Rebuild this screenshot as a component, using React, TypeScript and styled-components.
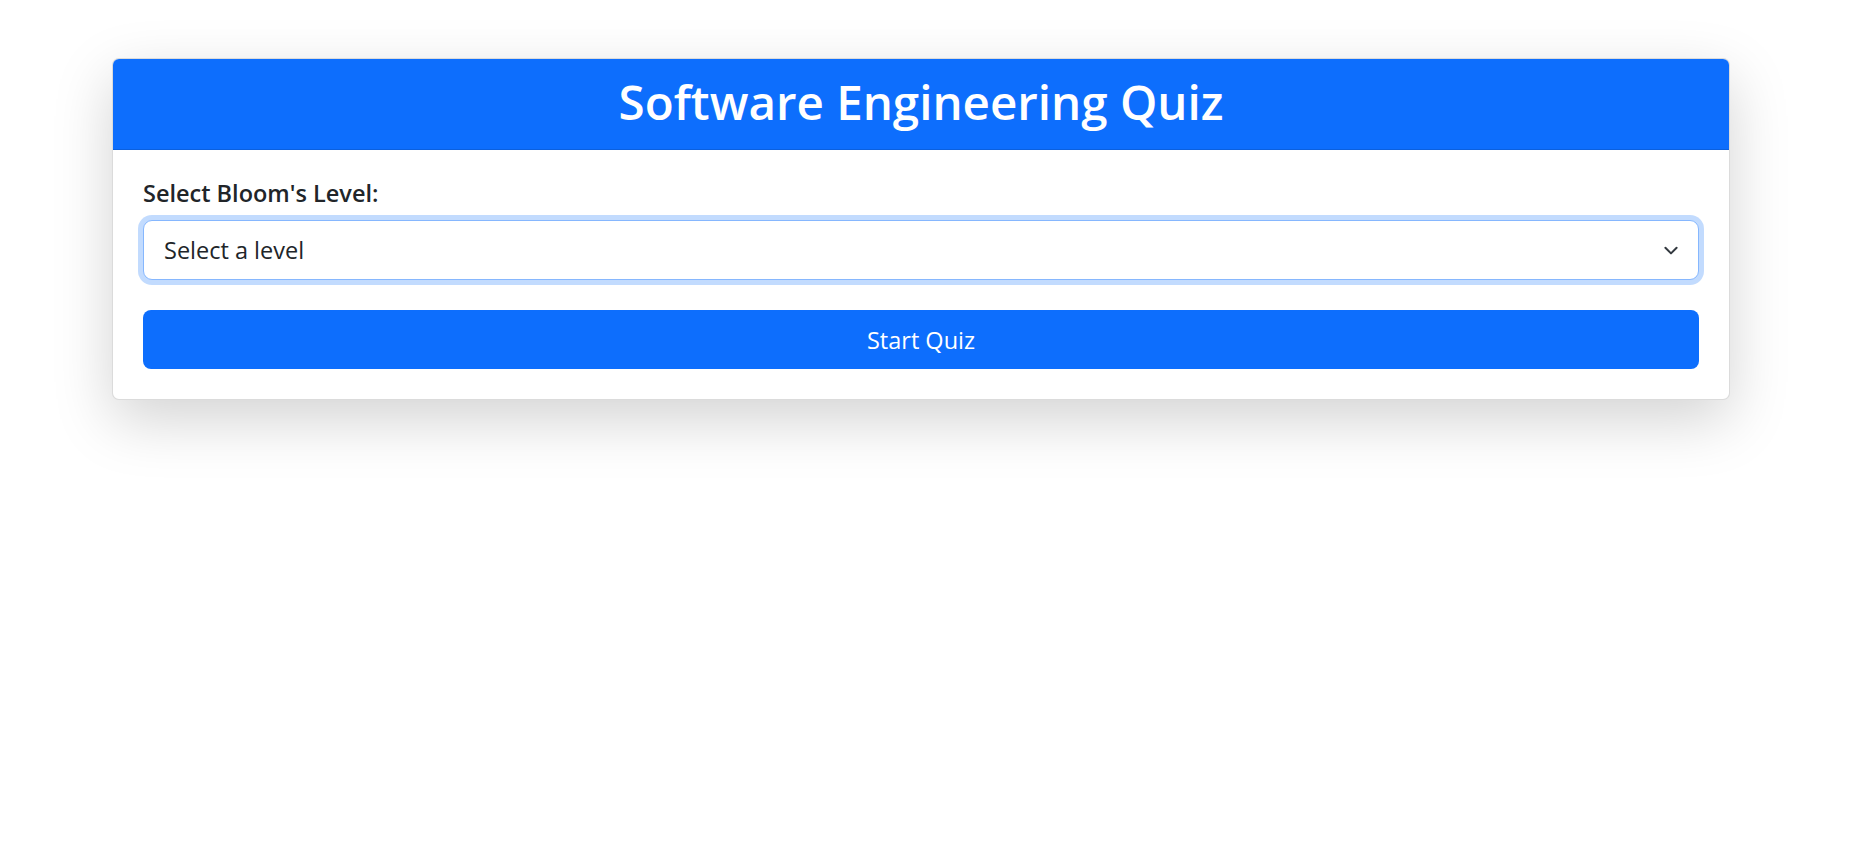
import React from "react";
import styled, { createGlobalStyle } from "styled-components";

const GlobalStyle = createGlobalStyle`
  html, body {
    margin: 0;
    padding: 0;
    background: #ffffff;
    font-family: "Open Sans", "Noto Sans", sans-serif;
    color: #212529;
  }
  * { box-sizing: border-box; }
`;

const Page = styled.div`
  padding: 58px 119px 0 112px;
  min-height: 863px;
`;

const Card = styled.div`
  display: flex;
  flex-direction: column;
  background: #ffffff;
  border: 1px solid rgba(0, 0, 0, 0.14);
  border-radius: 7px;
  box-shadow: 0 20px 60px rgba(0, 0, 0, 0.175);
  overflow: hidden;
`;

const Header = styled.div`
  background: #0d6efd;
  border-bottom: 1px solid rgba(0, 0, 0, 0.12);
  height: 91px;
  display: flex;
  align-items: center;
  justify-content: center;
`;

const Title = styled.h1`
  margin: 0;
  color: #ffffff;
  font-family: "Open Sans", "Noto Sans", sans-serif;
  font-weight: 600;
  font-size: 47.5px;
  line-height: 1.2;
  padding-bottom: 5px;
`;

const Body = styled.div`
  padding: 28px 30px 30px;
  display: flex;
  flex-direction: column;
`;

const Label = styled.label`
  display: block;
  font-weight: 600;
  font-size: 23.5px;
  line-height: 30px;
  margin-bottom: 12px;
  color: #212529;
`;

const SelectWrap = styled.div`
  position: relative;
  margin-bottom: 30px;
`;

const Select = styled.select`
  display: block;
  width: 100%;
  height: 60px;
  appearance: none;
  -webkit-appearance: none;
  font-family: "Open Sans", "Noto Sans", sans-serif;
  font-size: 23.5px;
  color: #212529;
  background: #ffffff;
  border: 1px solid #86b7fe;
  border-radius: 9px;
  padding: 0 60px 0 20px;
  box-shadow: 0 0 0 5px rgba(13, 110, 253, 0.25);
  outline: none;
`;

const Chevron = styled.svg`
  position: absolute;
  right: 19px;
  top: 50%;
  transform: translateY(-50%);
  width: 18px;
  height: 18px;
  pointer-events: none;
`;

const StartButton = styled.button`
  width: 100%;
  height: 59px;
  border: none;
  border-radius: 8px;
  background: #0d6efd;
  color: #ffffff;
  font-family: "Open Sans", "Noto Sans", sans-serif;
  font-size: 23.5px;
  cursor: pointer;
`;

export default function App() {
  return (
    <>
      <GlobalStyle />
      <Page>
        <Card>
          <Header>
            <Title>Software Engineering Quiz</Title>
          </Header>
          <Body>
            <Label htmlFor="level">Select Bloom's Level:</Label>
            <SelectWrap>
              <Select id="level" defaultValue="">
                <option value="">Select a level</option>
              </Select>
              <Chevron viewBox="0 0 16 16" fill="none">
                <path d="M3 6l5 5 5-5" stroke="#343a40" strokeWidth="1.8" strokeLinecap="round" strokeLinejoin="round" />
              </Chevron>
            </SelectWrap>
            <StartButton>Start Quiz</StartButton>
          </Body>
        </Card>
      </Page>
    </>
  );
}
